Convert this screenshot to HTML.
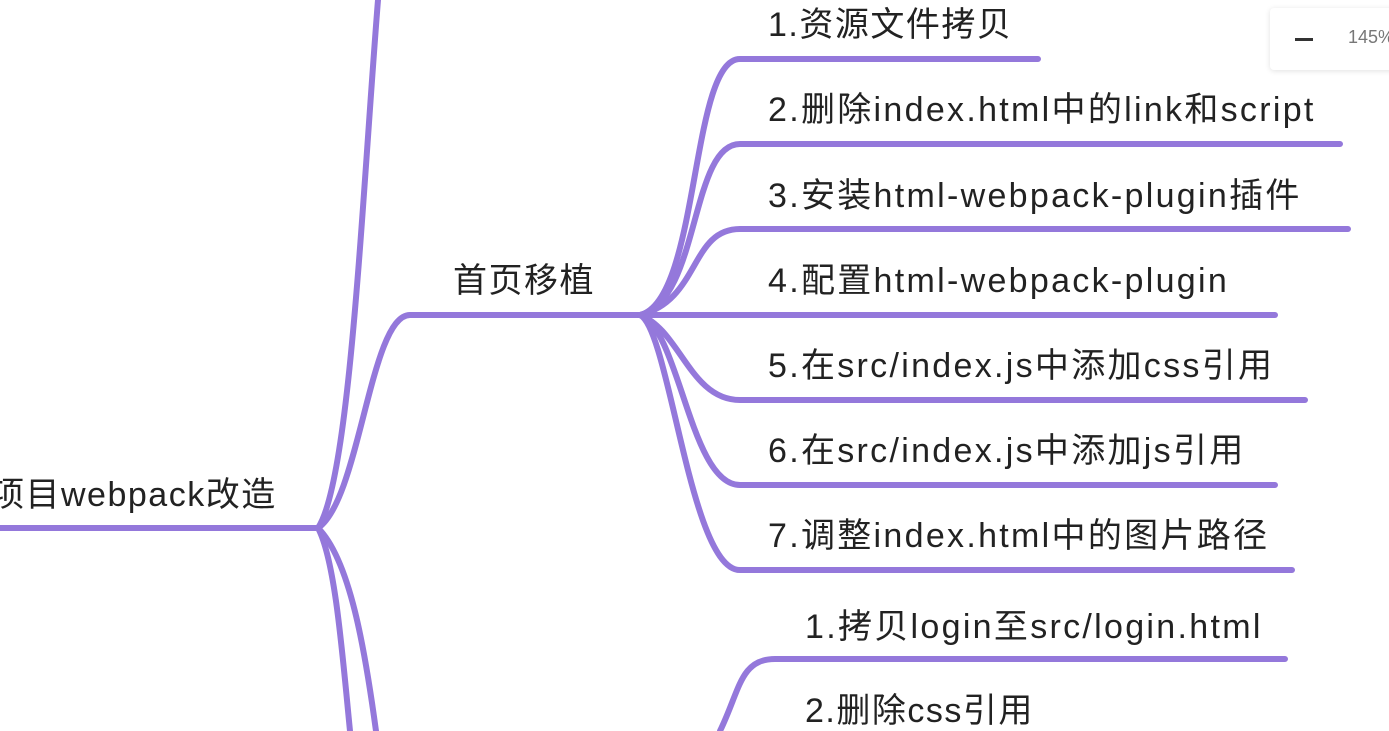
<!DOCTYPE html>
<html><head><meta charset="utf-8"><style>
html,body{margin:0;padding:0;background:#fff;width:1389px;height:731px;overflow:hidden;position:relative;font-family:"Liberation Sans","Noto Sans CJK SC",sans-serif;color:#222}
.t{position:absolute;font-size:34px;line-height:40px;letter-spacing:1.5px;white-space:nowrap;font-family:"Liberation Sans","Noto Sans CJK SC",sans-serif}
.w{letter-spacing:2.3px}
svg{position:absolute;left:0;top:0}
.zoom{position:absolute;left:1270px;top:8px;width:130px;height:62px;background:#fff;box-shadow:0 1px 6px rgba(0,0,0,.12);border-radius:4px}
</style></head><body>
<svg width="1389" height="731" fill="none" stroke="#9478db" stroke-width="6" stroke-linecap="round">
<path d="M0 528H318"/>
<path d="M318 528C350 480 362 200 378 0"/>
<path d="M318 528C360 500 370 315 410 315H640"/>
<path d="M318 528C335 560 342 650 350 731"/>
<path d="M318 528C350 560 365 650 376 731"/>
<path d="M640 315C700 300 690 59 740 59H1038"/>
<path d="M640 315C700 300 690 144 740 144H1340"/>
<path d="M640 315C700 300 690 229 740 229H1348"/>
<path d="M640 315H1275"/>
<path d="M640 315C680 330 690 400 740 400H1305"/>
<path d="M640 315C680 330 690 485 740 485H1275"/>
<path d="M640 315C670 330 690 570 740 570H1292"/>
<path d="M720 731C740 690 740 659 775 659H1285"/>
</svg>
<div class="t" style="left:768px;top:5px">1.资源文件拷贝</div>
<div class="t w" style="left:768px;top:90px">2.删除index.html中的link和script</div>
<div class="t w" style="left:768px;top:176px">3.安装html-webpack-plugin插件</div>
<div class="t w" style="left:768px;top:261px">4.配置html-webpack-plugin</div>
<div class="t w" style="left:768px;top:346px">5.在src/index.js中添加css引用</div>
<div class="t w" style="left:768px;top:431px">6.在src/index.js中添加js引用</div>
<div class="t w" style="left:768px;top:516px">7.调整index.html中的图片路径</div>
<div class="t" style="left:453px;top:261px">首页移植</div>
<div class="t" style="left:-10px;top:475px">项目webpack改造</div>
<div class="t w" style="left:805px;top:607px">1.拷贝login至src/login.html</div>
<div class="t" style="left:805px;top:691px">2.删除css引用</div>
<div class="zoom"><div style="position:absolute;left:25px;top:30px;width:18px;height:3px;background:#333"></div><div style="position:absolute;left:78px;top:19px;font-size:18px;color:#777">145%</div></div>
</body></html>
